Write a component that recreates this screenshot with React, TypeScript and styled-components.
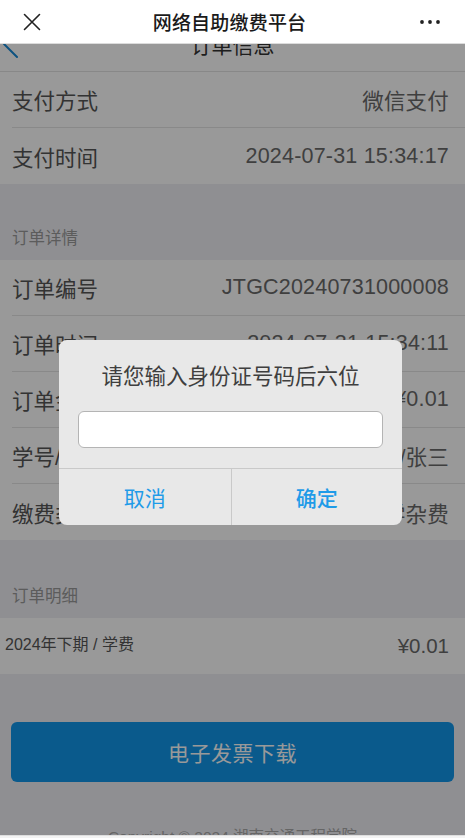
import React from "react";
import styled, { createGlobalStyle } from "styled-components";

const FONT = `"Liberation Sans", "Noto Sans CJK SC", sans-serif`;

const Global = createGlobalStyle`
  html, body { margin: 0; padding: 0; background: #efeff4; }
  body { font-family: ${FONT}; }
  * { box-sizing: border-box; }
`;

const Screen = styled.div`
  width: 465px;
  height: 838px;
  display: flex;
  flex-direction: column;
  overflow: hidden;
  background: #efeff4;
`;

const TopBar = styled.div`
  height: 44px;
  flex: 0 0 44px;
  background: #fff;
  border-bottom: 1px solid #dcdcdc;
  display: grid;
  grid-template-columns: 64px 1fr 70px;
  align-items: center;
  position: relative;
  z-index: 2;
`;

const IconCell = styled.div`
  display: flex;
  align-items: center;
  justify-content: center;
  height: 100%;
`;

const BarTitle = styled.div`
  text-align: center;
  font-size: 19px;
  font-weight: 500;
  color: #1a1a1a;
  letter-spacing: 0.2px;
`;

const Content = styled.div`
  flex: 1;
  position: relative;
  overflow: hidden;
`;

const Scroll = styled.div`
  margin-top: -28px;
`;

const Header = styled.div`
  height: 56px;
  background: #fff;
  border-bottom: 1px solid #e3e3e3;
  display: grid;
  grid-template-columns: 60px 1fr 60px;
  align-items: center;
`;

const BackCell = styled.div`
  display: flex;
  align-items: center;
  padding-left: 2px;
`;

const HeaderTitle = styled.div`
  text-align: center;
  font-size: 21px;
  color: #333;
`;

const Group = styled.div`
  background: #fff;
`;

const Row = styled.div`
  height: 56px;
  padding-left: 12px;
`;

const RowInner = styled.div<{ $last?: boolean }>`
  height: 100%;
  display: flex;
  align-items: center;
  justify-content: space-between;
  padding-right: 16px;
  border-bottom: ${(p) => (p.$last ? "none" : "1px solid #e4e4e4")};
`;

const Label = styled.span`
  font-size: 21.5px;
  color: #555;
`;

const Value = styled.span`
  font-size: 21.5px;
  color: #6a6a6a;
  letter-spacing: 0.2px;
`;

const SectionTitle = styled.div<{ $h: number }>`
  height: ${(p) => p.$h}px;
  display: flex;
  align-items: flex-end;
  padding: 0 0 12px 12px;
  font-size: 16.5px;
  line-height: 20px;
  color: #999;
`;

const DetailRow = styled.div`
  height: 56px;
  background: #fff;
  display: flex;
  align-items: center;
  justify-content: space-between;
  padding: 0 16px 0 5px;
`;

const DetailName = styled.span`
  font-size: 16px;
  color: #555;
  margin-top: -6px;
`;

const DetailPrice = styled.span`
  font-size: 20.5px;
  color: #6a6a6a;
`;

const InvoiceButton = styled.button`
  display: block;
  margin: 48px 11px 0;
  width: calc(100% - 22px);
  height: 60px;
  border: none;
  border-radius: 6px;
  background: #1196ea;
  color: #fff;
  font-family: ${FONT};
  font-size: 21px;
  letter-spacing: 0.5px;
`;

const Footer = styled.div`
  margin-top: 45px;
  text-align: center;
  font-size: 15.5px;
  line-height: 20px;
  color: #a8a8a8;
  padding-bottom: 30px;
`;

const Mask = styled.div`
  position: absolute;
  inset: 0;
  background: rgba(0, 0, 0, 0.4);
  display: flex;
  align-items: center;
  justify-content: center;
  padding-bottom: 14px;
  padding-right: 4px;
`;

const Dialog = styled.div`
  width: 343px;
  background: #e8e8e8;
  border-radius: 8px;
  overflow: hidden;
`;

const DialogBody = styled.div`
  padding: 22px 19px 20px;
  display: flex;
  flex-direction: column;
  gap: 19px;
`;

const DialogTitle = styled.div`
  text-align: center;
  font-size: 21.5px;
  line-height: 30px;
  color: #3f3f3f;
`;

const DialogInput = styled.input`
  height: 37px;
  width: 100%;
  border: 1px solid #b4b4b4;
  border-radius: 6px;
  background: #fff;
  outline: none;
  font-family: ${FONT};
  font-size: 18px;
  padding: 0 10px;
`;

const DialogActions = styled.div`
  display: grid;
  grid-template-columns: 1fr 1fr;
  border-top: 1px solid #c9c9c9;
  height: 57px;
`;

const DialogButton = styled.button<{ $primary?: boolean }>`
  border: none;
  background: transparent;
  color: #1f9be8;
  font-family: ${FONT};
  font-size: 21px;
  font-weight: ${(p) => (p.$primary ? 500 : 400)};
  border-left: ${(p) => (p.$primary ? "1px solid #c9c9c9" : "none")};
  padding: 0;
`;

const BottomStrip = styled.div`
  flex: 0 0 3px;
  background: #f3f3f3;
  border-top: 1px solid #dedede;
`;

const CloseIcon = () => (
  <svg width="18" height="18" viewBox="0 0 18 18">
    <path d="M1.5 1.5 L16.5 16.5 M16.5 1.5 L1.5 16.5" stroke="#222" strokeWidth="1.6" strokeLinecap="round" />
  </svg>
);

const MoreIcon = () => (
  <svg width="22" height="6" viewBox="0 0 22 6">
    <circle cx="3" cy="3" r="1.9" fill="#222" />
    <circle cx="11" cy="3" r="1.9" fill="#222" />
    <circle cx="19" cy="3" r="1.9" fill="#222" />
  </svg>
);

const BackIcon = () => (
  <svg width="18" height="30" viewBox="0 0 18 30">
    <path d="M15 2 L2 15 L15 28" stroke="#1689d6" strokeWidth="2" fill="none" strokeLinecap="round" strokeLinejoin="round" />
  </svg>
);

type Item = { label: string; value: string };

const payInfo: Item[] = [
  { label: "支付方式", value: "微信支付" },
  { label: "支付时间", value: "2024-07-31 15:34:17" },
];

const orderInfo: Item[] = [
  { label: "订单编号", value: "JTGC20240731000008" },
  { label: "订单时间", value: "2024-07-31 15:34:11" },
  { label: "订单金额", value: "¥0.01" },
  { label: "学号/姓名", value: "2024001/张三" },
  { label: "缴费类型", value: "学杂费" },
];

const InfoGroup = ({ items }: { items: Item[] }) => (
  <Group>
    {items.map((it, i) => (
      <Row key={it.label}>
        <RowInner $last={i === items.length - 1}>
          <Label>{it.label}</Label>
          <Value>{it.value}</Value>
        </RowInner>
      </Row>
    ))}
  </Group>
);

export default function App() {
  return (
    <>
      <Global />
      <Screen>
        <TopBar>
          <IconCell>
            <CloseIcon />
          </IconCell>
          <BarTitle>网络自助缴费平台</BarTitle>
          <IconCell>
            <MoreIcon />
          </IconCell>
        </TopBar>
        <Content>
          <Scroll>
            <Header>
              <BackCell>
                <BackIcon />
              </BackCell>
              <HeaderTitle>订单信息</HeaderTitle>
              <div />
            </Header>
            <InfoGroup items={payInfo} />
            <SectionTitle $h={76}>订单详情</SectionTitle>
            <InfoGroup items={orderInfo} />
            <SectionTitle $h={78}>订单明细</SectionTitle>
            <DetailRow>
              <DetailName>2024年下期 / 学费</DetailName>
              <DetailPrice>¥0.01</DetailPrice>
            </DetailRow>
            <InvoiceButton>电子发票下载</InvoiceButton>
            <Footer>Copyright © 2024 湖南交通工程学院</Footer>
          </Scroll>
          <Mask>
            <Dialog>
              <DialogBody>
                <DialogTitle>请您输入身份证号码后六位</DialogTitle>
                <DialogInput type="text" />
              </DialogBody>
              <DialogActions>
                <DialogButton>取消</DialogButton>
                <DialogButton $primary>确定</DialogButton>
              </DialogActions>
            </Dialog>
          </Mask>
        </Content>
        <BottomStrip />
      </Screen>
    </>
  );
}
